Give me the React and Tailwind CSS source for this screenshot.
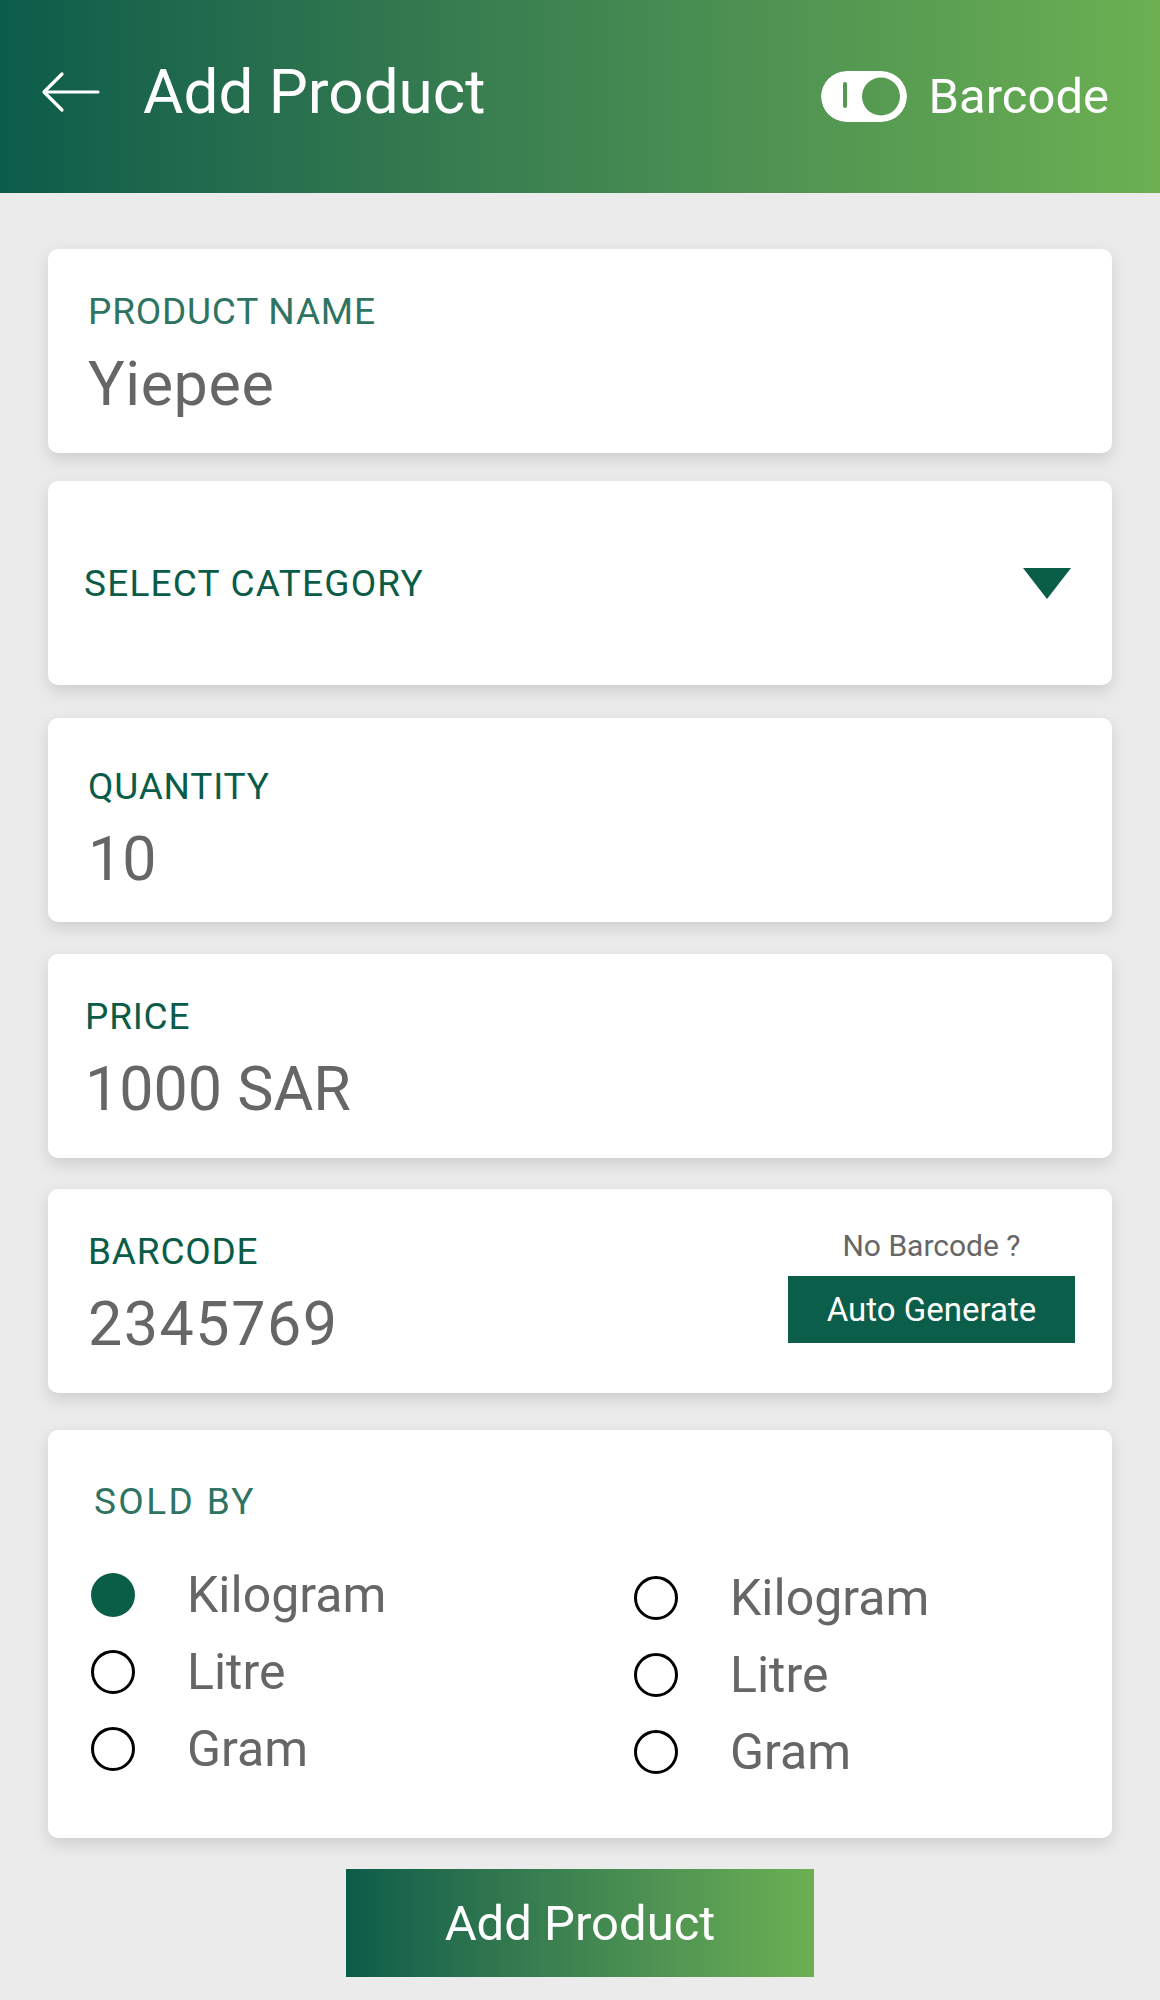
import React from 'react';

const font = { fontFamily: 'Roboto, "Liberation Sans", sans-serif' };

const BackArrow = () => (
  <svg width="60" height="42" viewBox="0 0 60 42" fill="none" stroke="white" strokeWidth="3.2" strokeLinecap="round" strokeLinejoin="round">
    <path d="M57 21H4" />
    <path d="M21 3L3 21L21 39" />
  </svg>
);

const ToggleIcon = () => (
  <svg width="86" height="51" viewBox="0 0 86 51">
    <defs>
      <mask id="toggle-cut">
        <rect x="0" y="0" width="86" height="51" rx="25.5" fill="white" />
        <circle cx="60" cy="25.5" r="19" fill="black" />
        <rect x="22" y="11" width="4" height="26" rx="2" fill="black" />
      </mask>
    </defs>
    <rect x="0" y="0" width="86" height="51" rx="25.5" fill="white" mask="url(#toggle-cut)" />
  </svg>
);

const Card = ({ className = '', children }) => (
  <div className={`mx-[48px] rounded-[10px] bg-white shadow-[0_6px_16px_rgba(0,0,0,0.13)] ${className}`}>
    {children}
  </div>
);

const Field = ({ label, value, labelColor = 'text-[#0a5c48]', className = '', pt = 'pt-[44px]', pl = 'pl-[40px]', valueClass = '', right }) => (
  <Card className={`h-[204px] ${className}`}>
    <div className={`flex h-full justify-between ${pt}`}>
      <div className={pl}>
        <div className={`text-[37px] leading-none tracking-[0.8px] ${labelColor}`}>{label}</div>
        <div className={`mt-6 text-[61px] leading-none text-[#666666] ${valueClass}`}>{value}</div>
      </div>
      {right}
    </div>
  </Card>
);

const Radio = ({ label, checked }) => (
  <div className="flex h-[44px] items-center">
    {checked ? (
      <span className="h-[44px] w-[44px] shrink-0 rounded-full bg-[#0a5e48]" />
    ) : (
      <span className="h-[44px] w-[44px] shrink-0 rounded-full border-[3.5px] border-black" />
    )}
    <span className="ml-[52px] text-[50px] leading-none text-[#666666]">{label}</span>
  </div>
);

export default function App() {
  const units = ['Kilogram', 'Litre', 'Gram'];

  return (
    <div className="min-h-screen bg-[#ebebeb] pb-[23px]" style={font}>
      <header className="flex h-[193px] items-center justify-between bg-gradient-to-r from-[#0b5c4a] to-[#6cb052] pl-[41px] pr-[51px]">
        <div className="mb-[10px] flex items-center">
          <BackArrow />
          <h1 className="ml-[42px] text-[62px] font-normal leading-none text-white">Add Product</h1>
        </div>
        <div className="flex items-center">
          <ToggleIcon />
          <span className="ml-[21px] text-[49px] leading-none text-white">Barcode</span>
        </div>
      </header>

      <div className="pt-[56px]">
        <Field label="PRODUCT NAME" value="Yiepee" labelColor="text-[#2f7462]" valueClass="tracking-[0.6px]" />

        <Card className="mt-[28px] flex h-[204px] items-center justify-between pl-[36px] pr-[41px]">
          <span className="text-[37px] leading-none tracking-[1.2px] text-[#0a5c48]">SELECT CATEGORY</span>
          <svg width="48" height="31" viewBox="0 0 48 31">
            <path d="M0 0H48L24 31Z" fill="#0a5e48" />
          </svg>
        </Card>

        <Field label="QUANTITY" value="10" className="mt-[33px]" pt="pt-[50px]" pl="pl-[40px]" />

        <Field label="PRICE" value="1000 SAR" className="mt-[32px]" pl="pl-[37px]" />

        <Field
          label="BARCODE"
          value="2345769"
          className="mt-[31px]"
          pl="pl-[40px]"
          pt="pt-[44px]"
          valueClass="tracking-[1.5px]"
          right={
            <div className="-mt-[2px] mr-[37px] flex flex-col items-center">
              <span className="text-[30px] leading-none text-[#666666]">No Barcode ?</span>
              <button className="mt-[15px] h-[67px] w-[287px] bg-[#0a5e4a] text-[33px] leading-none text-white">
                Auto Generate
              </button>
            </div>
          }
        />

        <Card className="mt-[37px] pb-[64px] pl-[43px] pt-[53px]">
          <div className="pl-[3px] text-[37px] leading-none tracking-[2.4px] text-[#2f7462]">SOLD BY</div>
          <div className="mt-[53px] grid grid-cols-[543px_1fr]">
            <div className="flex flex-col gap-[33px]">
              {units.map((u, i) => (
                <Radio key={u} label={u} checked={i === 0} />
              ))}
            </div>
            <div className="flex flex-col gap-[33px] pt-[3px]">
              {units.map((u) => (
                <Radio key={u} label={u} />
              ))}
            </div>
          </div>
        </Card>

        <div className="mt-[31px] flex justify-center">
          <button className="h-[108px] w-[468px] bg-gradient-to-r from-[#0b5c4a] to-[#6cb052] text-[49px] leading-none text-white">
            Add Product
          </button>
        </div>
      </div>
    </div>
  );
}
